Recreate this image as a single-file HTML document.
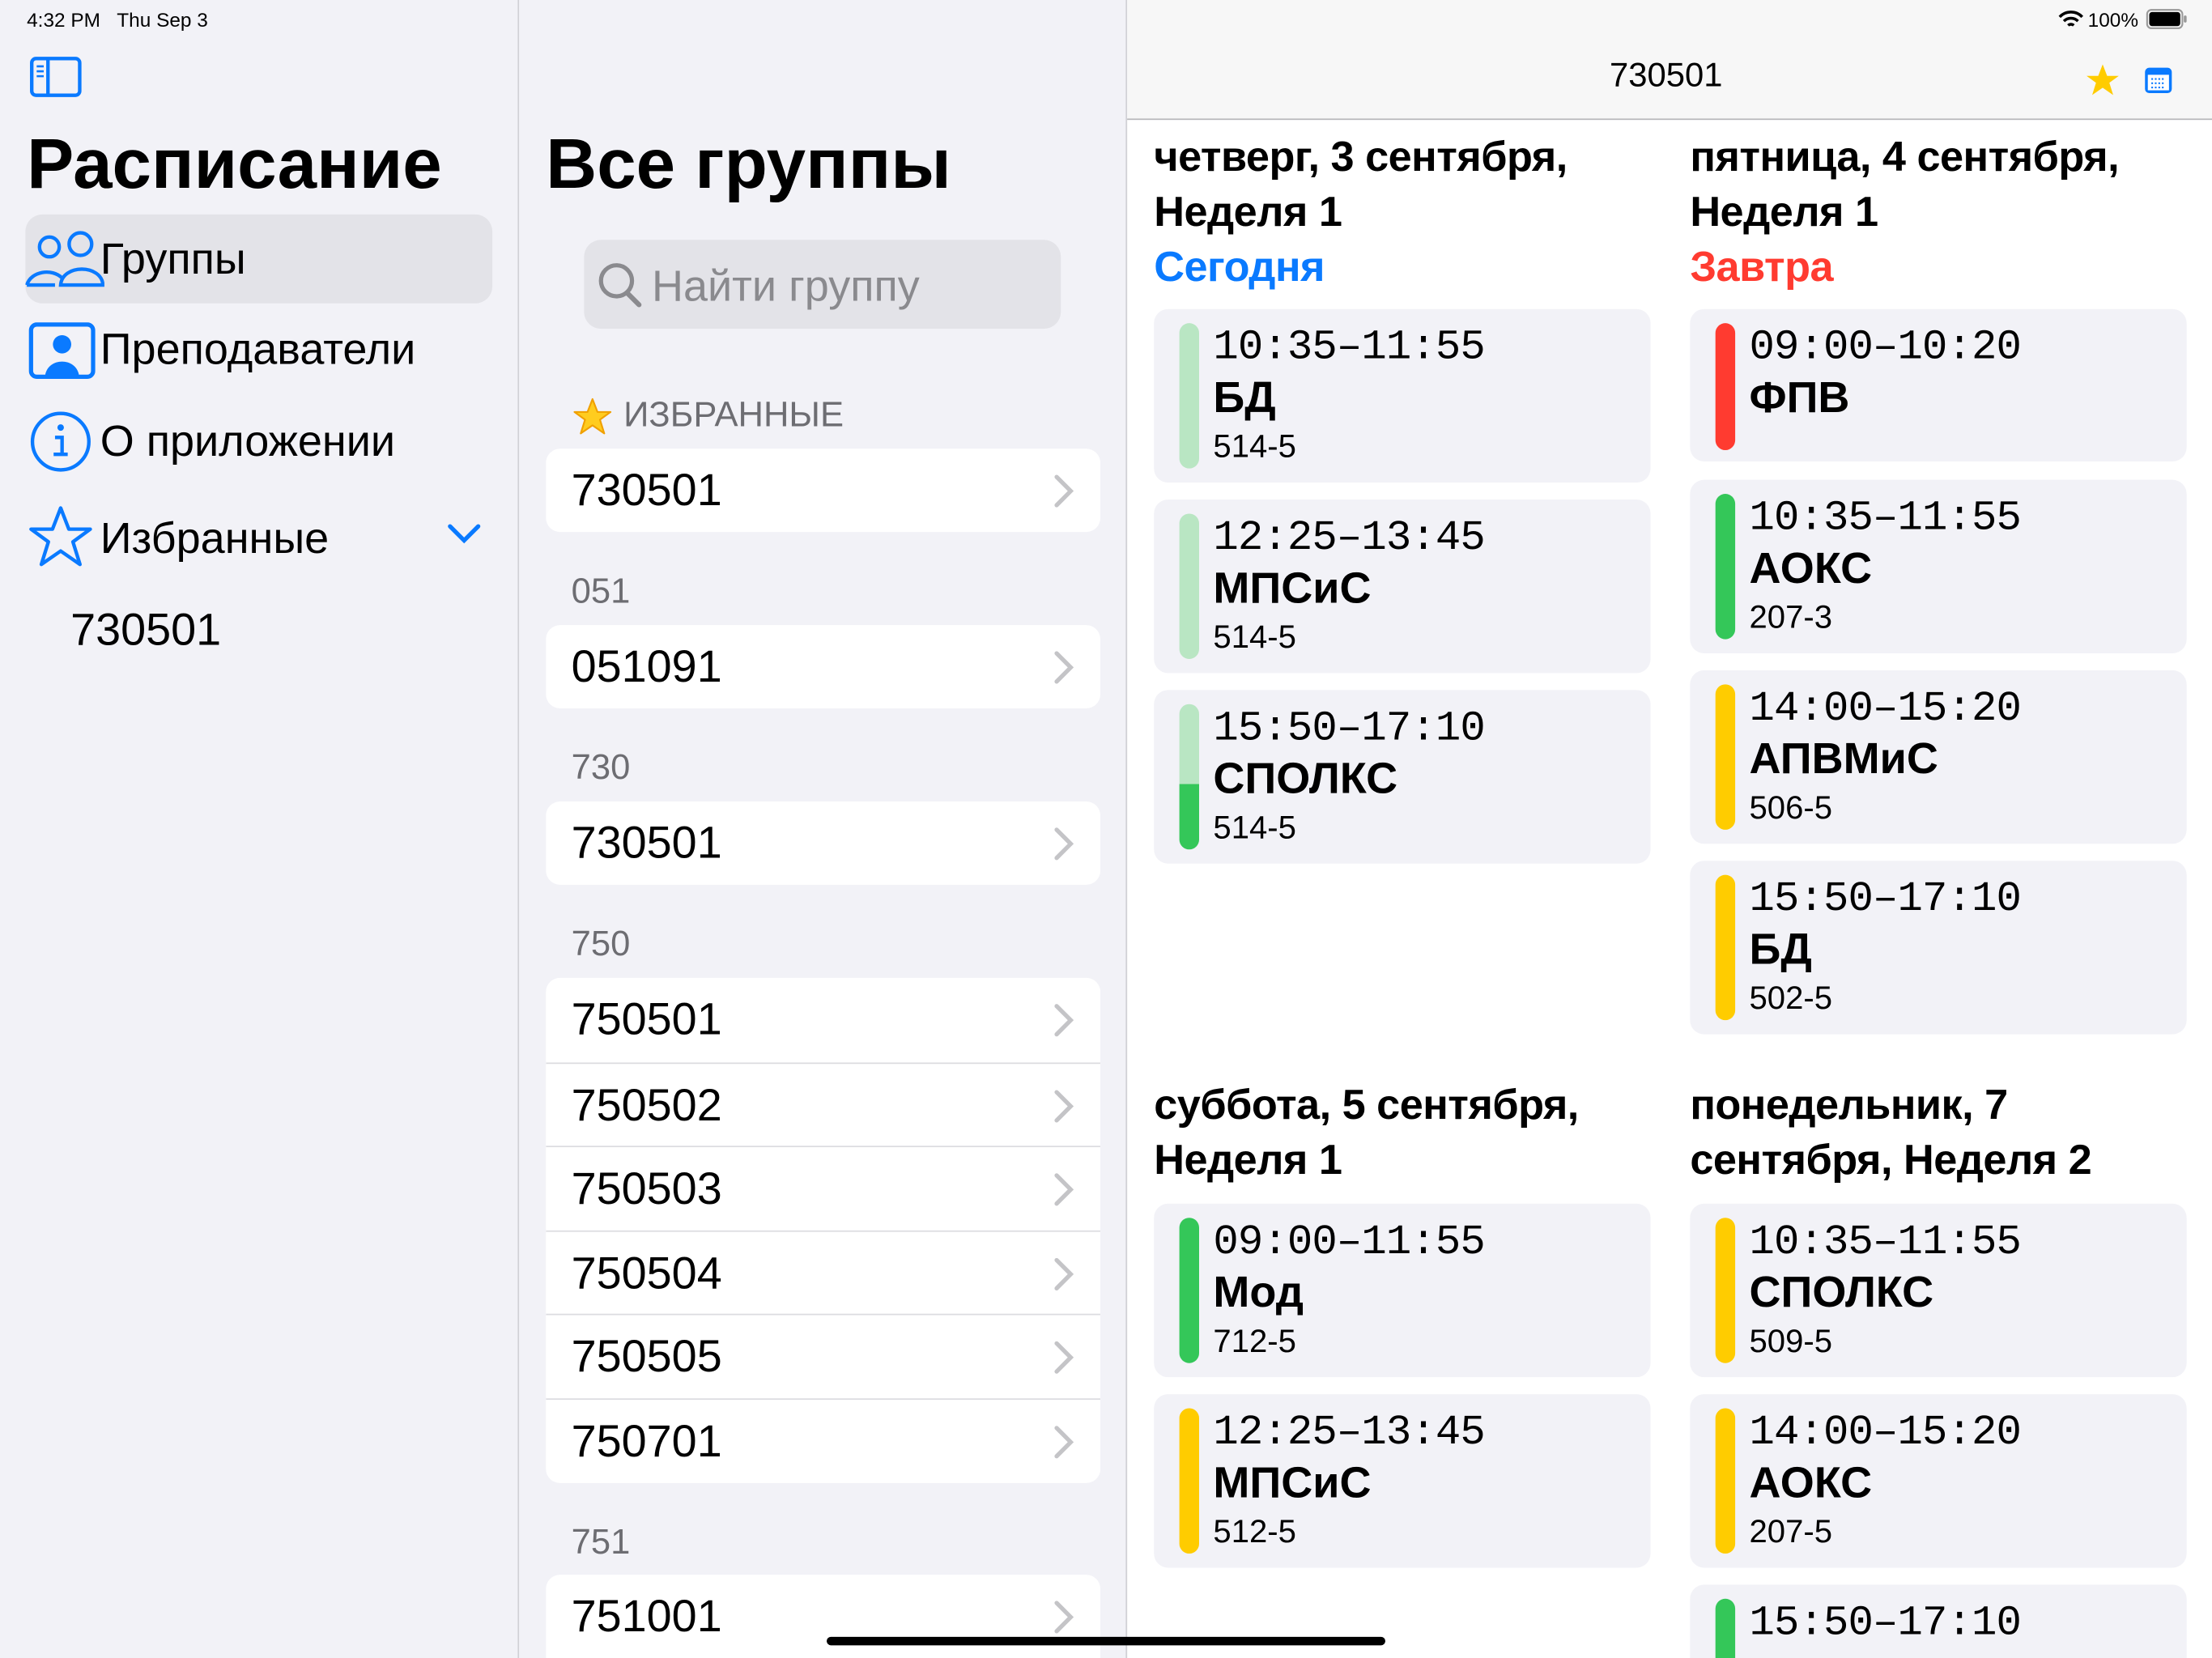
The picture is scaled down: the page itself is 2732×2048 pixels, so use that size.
<!DOCTYPE html>
<html><head><meta charset="utf-8"><style>
*{margin:0;padding:0;box-sizing:border-box}
html,body{width:2732px;height:2048px;overflow:hidden;background:#fff;position:relative}
#clip{position:absolute;left:0;top:0;width:2732px;height:2048px;overflow:hidden}
#w{position:absolute;left:0;top:0;width:1568px;height:1175px;overflow:hidden;transform-origin:0 0;transform:scale(1.74235,1.74298);font-family:"Liberation Sans","DejaVu Sans",sans-serif;color:#000}
.a{position:absolute;white-space:nowrap}
.row{position:absolute;left:387px;width:393px;height:59px;background:#fff}
.row span{position:absolute;left:18px;top:11px;font-size:32px}
.chev{position:absolute;right:18px;top:18px}
.sec{position:absolute;left:405px;font-size:25px;color:#6d6d72}
.card{position:absolute;width:352px;height:123px;background:#f2f2f7;border-radius:10px}
.bar{position:absolute;left:18px;top:10px;width:14px;height:103px;border-radius:7px}
.t{position:absolute;left:42px;top:11px;font-family:"Liberation Mono",monospace;font-size:30px;letter-spacing:-0.5px}
.s{position:absolute;left:42px;top:45px;font-size:31px;font-weight:bold}
.r{position:absolute;left:42px;top:84px;font-size:23px}
.dh{position:absolute;font-size:30px;font-weight:bold;line-height:39px;letter-spacing:-0.3px}
</style></head><body><div id="clip"><div id="w">
<div class="a" style="left:0;top:0;width:368px;height:1175px;background:#f2f2f7;border-right:1px solid #d0d0d5"></div>
<div class="a" style="left:368px;top:0;width:431px;height:1175px;background:#f2f2f7;border-right:1px solid #d0d0d5"></div>
<div class="a" style="left:19px;top:6px;font-size:14px">4:32 PM&nbsp;&nbsp;&nbsp;Thu Sep 3</div>
<svg class="a" style="left:21px;top:40px" width="37" height="29" viewBox="0 0 37 29"><rect x="1.5" y="1.5" width="34" height="26" rx="3" fill="none" stroke="#0a7aff" stroke-width="2.5"/><line x1="13" y1="2" x2="13" y2="27" stroke="#0a7aff" stroke-width="2.5"/><path d="M5 7h5M5 10.5h5M5 14h5" stroke="#0a7aff" stroke-width="1.5"/></svg>
<div class="a" style="left:19px;top:87px;font-size:50px;font-weight:bold">Расписание</div>
<div class="a" style="left:18px;top:152px;width:331px;height:63px;background:#e3e3e8;border-radius:12px"></div>
<svg class="a" style="left:18px;top:161px" width="56" height="44" viewBox="0 0 56 44"><circle cx="17" cy="14" r="7" fill="none" stroke="#0a7aff" stroke-width="2.5"/><circle cx="39" cy="12" r="8" fill="none" stroke="#0a7aff" stroke-width="2.5"/><path d="M1 41h20M1 41c3-10 18-12 25-5" fill="none" stroke="#0a7aff" stroke-width="2.5"/><path d="M25 41c1-15 29-15 30 0z" fill="none" stroke="#0a7aff" stroke-width="2.5"/></svg>
<div class="a" style="left:71px;top:166px;font-size:31px">Группы</div>
<svg class="a" style="left:20px;top:228px" width="48" height="41" viewBox="0 0 48 41"><rect x="2" y="2" width="44" height="37" rx="4" fill="none" stroke="#0a7aff" stroke-width="3"/><circle cx="24" cy="16" r="6.5" fill="#0a7aff"/><path d="M12 38c2-13 22-13 24 0z" fill="#0a7aff"/></svg>
<div class="a" style="left:71px;top:230px;font-size:31px">Преподаватели</div>
<svg class="a" style="left:21px;top:291px" width="44" height="44" viewBox="0 0 44 44"><circle cx="22" cy="22" r="20" fill="none" stroke="#0a7aff" stroke-width="2.5"/><circle cx="22" cy="12" r="2.3" fill="#0a7aff"/><path d="M18 19h5v12M17 31h10" fill="none" stroke="#0a7aff" stroke-width="2.5"/></svg>
<div class="a" style="left:71px;top:295px;font-size:31px">О приложении</div>
<svg class="a" style="left:20px;top:357px" width="46" height="46" viewBox="0 0 46 46"><path d="M23 3l5.8 15H44l-12.3 9 5 16L23 33.5 9.3 43l5-16L2 18h15.2z" fill="none" stroke="#0a7aff" stroke-width="2.5" stroke-linejoin="round"/></svg>
<div class="a" style="left:71px;top:364px;font-size:31px">Избранные</div>
<svg class="a" style="left:316px;top:370px" width="26" height="16" viewBox="0 0 26 16"><path d="M3 3l10 10 10-10" fill="none" stroke="#0a7aff" stroke-width="3" stroke-linecap="round"/></svg>
<div class="a" style="left:50px;top:428px;font-size:32px">730501</div>
<div class="a" style="left:387px;top:87px;font-size:50px;font-weight:bold">Все группы</div>
<div class="a" style="left:414px;top:170px;width:338px;height:63px;background:#e3e3e8;border-radius:12px"></div>
<svg class="a" style="left:423px;top:184px" width="34" height="36" viewBox="0 0 34 36"><circle cx="14" cy="15" r="11" fill="none" stroke="#8a8a8e" stroke-width="3"/><path d="M22 24l8 8" stroke="#8a8a8e" stroke-width="3.5" stroke-linecap="round"/></svg>
<div class="a" style="left:462px;top:185px;font-size:31px;color:#8a8a8e">Найти группу</div>
<div class="a" style="left:442px;top:280px;font-size:25px;color:#6d6d72">ИЗБРАННЫЕ</div>
<svg class="a" style="left:405px;top:281px" width="30" height="28" viewBox="0 0 46 46"><path d="M23 3l5.8 15H44l-12.3 9 5 16L23 33.5 9.3 43l5-16L2 18h15.2z" fill="#ffcc1f" stroke="#f0a000" stroke-width="2" stroke-linejoin="round"/></svg>
<div class="row" style="top:318px;border-radius:10px"><span>730501</span><svg class="chev" width="16" height="24"><path d="M3 2l10 10-10 10" fill="none" stroke="#c4c4c7" stroke-width="3" stroke-linecap="round"/></svg></div>
<div class="sec" style="top:405px">051</div>
<div class="row" style="top:443px;border-radius:10px"><span>051091</span><svg class="chev" width="16" height="24"><path d="M3 2l10 10-10 10" fill="none" stroke="#c4c4c7" stroke-width="3" stroke-linecap="round"/></svg></div>
<div class="sec" style="top:530px">730</div>
<div class="row" style="top:568px;border-radius:10px"><span>730501</span><svg class="chev" width="16" height="24"><path d="M3 2l10 10-10 10" fill="none" stroke="#c4c4c7" stroke-width="3" stroke-linecap="round"/></svg></div>
<div class="sec" style="top:655px">750</div>
<div class="a" style="left:387px;top:693px;width:393px;height:358px;background:#fff;border-radius:10px;overflow:hidden">
<div class="row" style="left:0;top:0"><span>750501</span><svg class="chev" width="16" height="24"><path d="M3 2l10 10-10 10" fill="none" stroke="#c4c4c7" stroke-width="3" stroke-linecap="round"/></svg></div>
<div class="row" style="left:0;top:59.6px;border-top:1px solid #dcdce0"><span>750502</span><svg class="chev" width="16" height="24"><path d="M3 2l10 10-10 10" fill="none" stroke="#c4c4c7" stroke-width="3" stroke-linecap="round"/></svg></div>
<div class="row" style="left:0;top:119.2px;border-top:1px solid #dcdce0"><span>750503</span><svg class="chev" width="16" height="24"><path d="M3 2l10 10-10 10" fill="none" stroke="#c4c4c7" stroke-width="3" stroke-linecap="round"/></svg></div>
<div class="row" style="left:0;top:178.8px;border-top:1px solid #dcdce0"><span>750504</span><svg class="chev" width="16" height="24"><path d="M3 2l10 10-10 10" fill="none" stroke="#c4c4c7" stroke-width="3" stroke-linecap="round"/></svg></div>
<div class="row" style="left:0;top:238.4px;border-top:1px solid #dcdce0"><span>750505</span><svg class="chev" width="16" height="24"><path d="M3 2l10 10-10 10" fill="none" stroke="#c4c4c7" stroke-width="3" stroke-linecap="round"/></svg></div>
<div class="row" style="left:0;top:298px;border-top:1px solid #dcdce0"><span>750701</span><svg class="chev" width="16" height="24"><path d="M3 2l10 10-10 10" fill="none" stroke="#c4c4c7" stroke-width="3" stroke-linecap="round"/></svg></div>
</div>
<div class="sec" style="top:1079px">751</div>
<div class="row" style="top:1116px;height:70px;border-radius:10px"><span>751001</span><svg class="chev" width="16" height="24"><path d="M3 2l10 10-10 10" fill="none" stroke="#c4c4c7" stroke-width="3" stroke-linecap="round"/></svg></div>
<div class="a" style="left:799px;top:0;width:769px;height:85px;background:#f7f7f7;border-bottom:1px solid #b8b8bb"></div>
<div class="a" style="left:1141px;top:40px;font-size:24px">730501</div>
<div class="a" style="left:1480px;top:6px;font-size:14px">100%</div>
<svg class="a" style="left:1459px;top:7px" width="18" height="13" viewBox="0 0 18 13"><path d="M1 5a11 11 0 0 1 16 0M4 8a7 7 0 0 1 10 0M7 11a3 3 0 0 1 4 0" fill="none" stroke="#000" stroke-width="2"/></svg>
<svg class="a" style="left:1521px;top:6px" width="30" height="15" viewBox="0 0 30 15"><rect x="1" y="1" width="25" height="13" rx="3" fill="none" stroke="#999" stroke-width="1.2"/><rect x="2.5" y="2.5" width="22" height="10" rx="2" fill="#000"/><rect x="27" y="5" width="2" height="5" rx="1" fill="#999"/></svg>
<svg class="a" style="left:1478px;top:44px" width="25" height="25" viewBox="0 0 46 46"><path d="M23 3l5.8 15H44l-12.3 9 5 16L23 33.5 9.3 43l5-16L2 18h15.2z" fill="#ffcc00"/></svg>
<svg class="a" style="left:1520px;top:47px" width="20" height="20" viewBox="0 0 20 20"><rect x="0.5" y="1" width="19" height="18" rx="3" fill="#0a7aff"/><rect x="2.5" y="6" width="15" height="11" fill="#fff"/><path d="M5 9h10M5 12h10M5 15h10" stroke="#0a7aff" stroke-width="1.2" stroke-dasharray="1.2 1.3"/></svg>
<div class="dh" style="left:818px;top:92px">четверг, 3 сентября,<br>Неделя 1<br><span style="color:#0a7aff">Сегодня</span></div>
<div class="dh" style="left:1198px;top:92px">пятница, 4 сентября,<br>Неделя 1<br><span style="color:#ff3b30">Завтра</span></div>
<div class="dh" style="left:818px;top:764px">суббота, 5 сентября,<br>Неделя 1</div>
<div class="dh" style="left:1198px;top:764px">понедельник, 7<br>сентября, Неделя 2</div>
<div class="card" style="left:818px;top:219px"><div class="bar" style="background:#b9e6c3"></div><div class="t">10:35–11:55</div><div class="s">БД</div><div class="r">514-5</div></div>
<div class="card" style="left:818px;top:354px"><div class="bar" style="background:#b9e6c3"></div><div class="t">12:25–13:45</div><div class="s">МПСиС</div><div class="r">514-5</div></div>
<div class="card" style="left:818px;top:489px"><div class="bar" style="background:linear-gradient(#b9e6c3 0 55%,#34c759 55%)"></div><div class="t">15:50–17:10</div><div class="s">СПОЛКС</div><div class="r">514-5</div></div>
<div class="card" style="left:818px;top:853px"><div class="bar" style="background:#34c759"></div><div class="t">09:00–11:55</div><div class="s">Мод</div><div class="r">712-5</div></div>
<div class="card" style="left:818px;top:988px"><div class="bar" style="background:#ffcc00"></div><div class="t">12:25–13:45</div><div class="s">МПСиС</div><div class="r">512-5</div></div>
<div class="card" style="left:1198px;top:219px;height:108px"><div class="bar" style="background:#ff3b30;height:90px"></div><div class="t">09:00–10:20</div><div class="s">ФПВ</div></div>
<div class="card" style="left:1198px;top:340px"><div class="bar" style="background:#34c759"></div><div class="t">10:35–11:55</div><div class="s">АОКС</div><div class="r">207-3</div></div>
<div class="card" style="left:1198px;top:475px"><div class="bar" style="background:#ffcc00"></div><div class="t">14:00–15:20</div><div class="s">АПВМиС</div><div class="r">506-5</div></div>
<div class="card" style="left:1198px;top:610px"><div class="bar" style="background:#ffcc00"></div><div class="t">15:50–17:10</div><div class="s">БД</div><div class="r">502-5</div></div>
<div class="card" style="left:1198px;top:853px"><div class="bar" style="background:#ffcc00"></div><div class="t">10:35–11:55</div><div class="s">СПОЛКС</div><div class="r">509-5</div></div>
<div class="card" style="left:1198px;top:988px"><div class="bar" style="background:#ffcc00"></div><div class="t">14:00–15:20</div><div class="s">АОКС</div><div class="r">207-5</div></div>
<div class="card" style="left:1198px;top:1123px;height:52px;border-radius:10px 10px 0 0"><div class="bar" style="background:#34c759;height:60px"></div><div class="t">15:50–17:10</div></div>
<div class="a" style="left:586px;top:1160px;width:396px;height:6px;background:#000;border-radius:3px"></div>
</div></div></body></html>
